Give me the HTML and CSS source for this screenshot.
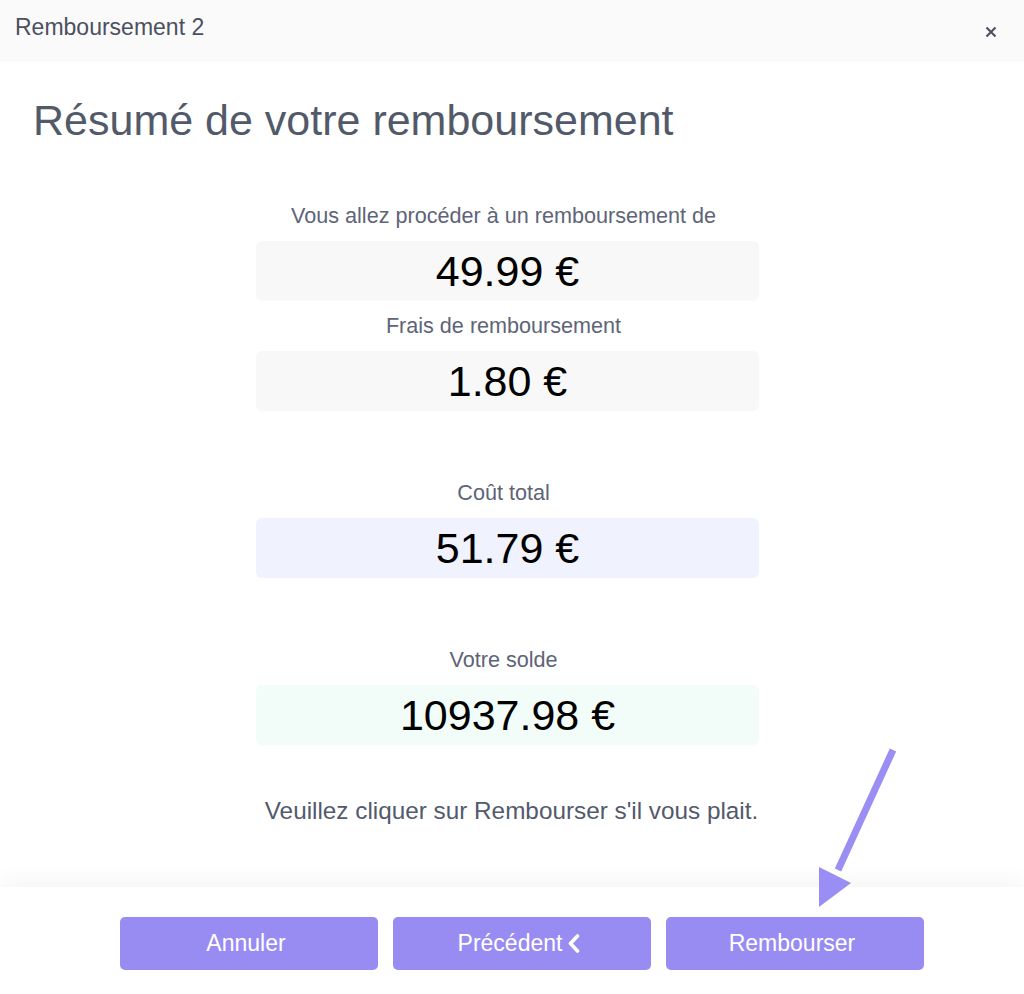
FILE: index.html
```html
<!DOCTYPE html>
<html lang="fr">
<head>
<meta charset="utf-8">
<title>Remboursement 2</title>
<link rel="stylesheet" href="styles.css">
</head>
<body>
<div class="modal">
  <header class="modal-header">
    <span class="modal-title">Remboursement 2</span>
    <button class="close" type="button" aria-label="Fermer"><svg viewBox="0 0 12 12" width="12" height="12"><path d="M1.5 1.5 L10.5 10.5 M10.5 1.5 L1.5 10.5" stroke="#4b5060" stroke-width="2.1" stroke-linecap="butt"/></svg></button>
  </header>
  <main class="modal-body">
    <h1 class="page-title">Résumé de votre remboursement</h1>
    <section class="summary">
      <div class="group">
        <p class="label">Vous allez procéder à un remboursement de</p>
        <div class="amount amount-neutral">49.99 €</div>
        <p class="label">Frais de remboursement</p>
        <div class="amount amount-neutral">1.80 €</div>
      </div>
      <div class="group">
        <p class="label">Coût total</p>
        <div class="amount amount-total">51.79 €</div>
      </div>
      <div class="group">
        <p class="label">Votre solde</p>
        <div class="amount amount-balance">10937.98 €</div>
      </div>
      <p class="hint">Veuillez cliquer sur Rembourser s'il vous plait.</p>
    </section>
  </main>
  <footer class="modal-footer">
    <button class="btn" type="button">Annuler</button>
    <button class="btn" type="button">Précédent <svg class="chev" viewBox="0 0 12 19" width="12" height="19"><path d="M9.5 2 L2.5 9.5 L9.5 17" fill="none" stroke="#fff" stroke-width="3.6" stroke-linecap="round" stroke-linejoin="round"/></svg></button>
    <button class="btn" type="button">Rembourser</button>
  </footer>
  <svg class="arrow" viewBox="0 0 100 170" width="100" height="170">
    <line x1="83" y1="10" x2="28" y2="130" stroke="#9a8ef4" stroke-width="7"/>
    <polygon points="9,127 41,143 9,167" fill="#9a8ef4"/>
  </svg>
</div>
</body>
</html>
```

FILE: styles.css
```css
* { box-sizing: border-box; }
html, body {
  margin: 0;
  padding: 0;
  height: 994px;
  background: #ffffff;
  font-family: "Liberation Sans", Arial, sans-serif;
}
.modal {
  position: relative;
  height: 994px;
  display: flex;
  flex-direction: column;
  overflow: hidden;
}
.modal-header {
  height: 62px;
  background: #fafafa;
  display: flex;
  align-items: flex-start;
  justify-content: space-between;
  padding: 14px 27px 0 15px;
}
.modal-title {
  font-size: 23px;
  line-height: 26px;
  color: #4b5060;
}
.close {
  border: 0;
  background: transparent;
  padding: 0;
  margin-top: 12px;
  width: 12px;
  height: 12px;
  cursor: pointer;
}
.close svg { display: block; }
.modal-body {
  flex: 1;
  display: flex;
  flex-direction: column;
  padding: 0 33px;
}
.page-title {
  margin: 33px 0 0 0;
  font-size: 43px;
  line-height: 50px;
  font-weight: 400;
  color: #525a6a;
}
.summary {
  align-self: center;
  margin-top: 46px;
  margin-right: 9px;
  width: 503px;
  display: flex;
  flex-direction: column;
}
.group {
  display: flex;
  flex-direction: column;
}
.group + .group { margin-top: 57px; }
.label {
  margin: 0;
  padding: 13px 8px 13px 0;
  text-align: center;
  font-size: 21.6px;
  line-height: 24px;
  color: #5e6477;
  white-space: nowrap;
}
.amount {
  height: 60px;
  border-radius: 6px;
  display: flex;
  align-items: center;
  justify-content: center;
  font-size: 43px;
  color: #000;
}
.amount-neutral { background: #f8f8f8; }
.amount-total { background: #f0f2fe; }
.amount-balance { background: #f2fdf9; }
.hint {
  margin: 52px 0 0 0;
  text-align: center;
  font-size: 24.3px;
  line-height: 28px;
  color: #535a6b;
  white-space: nowrap;
  padding-left: 8px;
}
.modal-footer {
  height: 107px;
  flex: none;
  background: #fff;
  box-shadow: 0 -6px 22px rgba(0, 0, 0, 0.045);
  display: flex;
  justify-content: center;
  align-items: flex-start;
  gap: 15px;
  padding: 30px 0 0 20px;
}
.btn {
  width: 258px;
  height: 53px;
  border: 0;
  border-radius: 5px;
  background: #988cf2;
  color: #fff;
  font-family: "Liberation Sans", Arial, sans-serif;
  font-size: 23px;
  display: flex;
  align-items: center;
  justify-content: center;
  gap: 6px;
  padding: 0 6px 0 0;
}
.chev { display: block; }
.arrow {
  position: absolute;
  left: 810px;
  top: 740px;
}
```
